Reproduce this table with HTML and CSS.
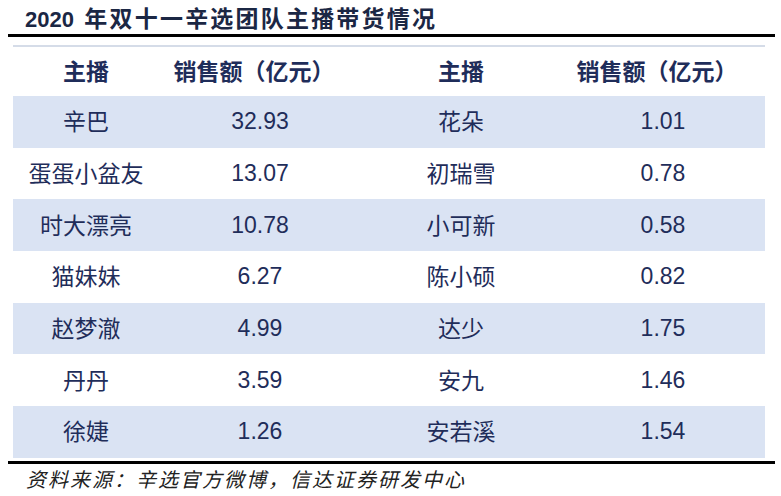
FILE: index.html
```html
<!DOCTYPE html>
<html lang="zh-CN">
<head>
<meta charset="utf-8">
<title>2020 年双十一辛选团队主播带货情况</title>
<link rel="stylesheet" href="styles.css">
</head>
<body>
<div class="page">
  <h1 class="title"><span class="num">2020</span> 年双十一辛选团队主播带货情况</h1>
  <div class="rule rule-top"></div>
  <div class="table">
    <div class="row head">
      <div class="cell">主播</div>
      <div class="cell val">销售额（亿元）</div>
      <div class="cell">主播</div>
      <div class="cell val">销售额（亿元）</div>
    </div>
    <div class="row alt">
      <div class="cell">辛巴</div><div class="cell num">32.93</div>
      <div class="cell">花朵</div><div class="cell num">1.01</div>
    </div>
    <div class="row">
      <div class="cell">蛋蛋小盆友</div><div class="cell num">13.07</div>
      <div class="cell">初瑞雪</div><div class="cell num">0.78</div>
    </div>
    <div class="row alt">
      <div class="cell">时大漂亮</div><div class="cell num">10.78</div>
      <div class="cell">小可新</div><div class="cell num">0.58</div>
    </div>
    <div class="row">
      <div class="cell">猫妹妹</div><div class="cell num">6.27</div>
      <div class="cell">陈小硕</div><div class="cell num">0.82</div>
    </div>
    <div class="row alt">
      <div class="cell">赵梦澈</div><div class="cell num">4.99</div>
      <div class="cell">达少</div><div class="cell num">1.75</div>
    </div>
    <div class="row">
      <div class="cell">丹丹</div><div class="cell num">3.59</div>
      <div class="cell">安九</div><div class="cell num">1.46</div>
    </div>
    <div class="row alt">
      <div class="cell">徐婕</div><div class="cell num">1.26</div>
      <div class="cell">安若溪</div><div class="cell num">1.54</div>
    </div>
  </div>
  <div class="rule rule-bottom"></div>
  <p class="source">资料来源：辛选官方微博，信达证券研发中心</p>
</div>
</body>
</html>
```

FILE: styles.css
```css
html, body {
  margin: 0;
  padding: 0;
  background: #ffffff;
}

.page {
  width: 781px;
  height: 496px;
  overflow: hidden;
  font-family: "Noto Sans CJK SC", "Liberation Sans", sans-serif;
}

.title {
  margin: 0;
  height: 34px;
  padding-left: 25px;
  box-sizing: border-box;
  font-size: 23px;
  line-height: 34px;
  font-weight: 700;
  color: #1b2744;
  letter-spacing: 2.2px;
  white-space: nowrap;
}

.title .num {
  font-family: "Liberation Sans", sans-serif;
  font-size: 22px;
  letter-spacing: 0;
  margin-right: 3px;
}

.rule {
  height: 3px;
  background: #000000;
  margin: 0 6px 0 8px;
}

.table {
  margin: 8px 16px 0 13px;
  border-top: 2px solid #d5dce8;
}

.row {
  display: grid;
  grid-template-columns: 146px 202px 200px 204px;
  height: 51.7px;
  align-items: center;
  color: #1f2d5a;
  font-size: 23px;
}

.row.head {
  height: 49px;
  font-weight: 700;
  font-size: 23px;
}

.row.alt {
  background: #dae3f3;
}

.cell {
  text-align: center;
  white-space: nowrap;
  padding-bottom: 3px;
}

.head .val {
  padding-right: 12px;
}

.cell.num {
  font-family: "Liberation Sans", sans-serif;
  font-size: 23px;
  padding-bottom: 0;
}

.rule-bottom {
  margin-top: 3px;
}

.source {
  margin: 0;
  padding-left: 26px;
  font-size: 20px;
  line-height: 30px;
  font-style: italic;
  letter-spacing: 2px;
  color: #222222;
}
```
